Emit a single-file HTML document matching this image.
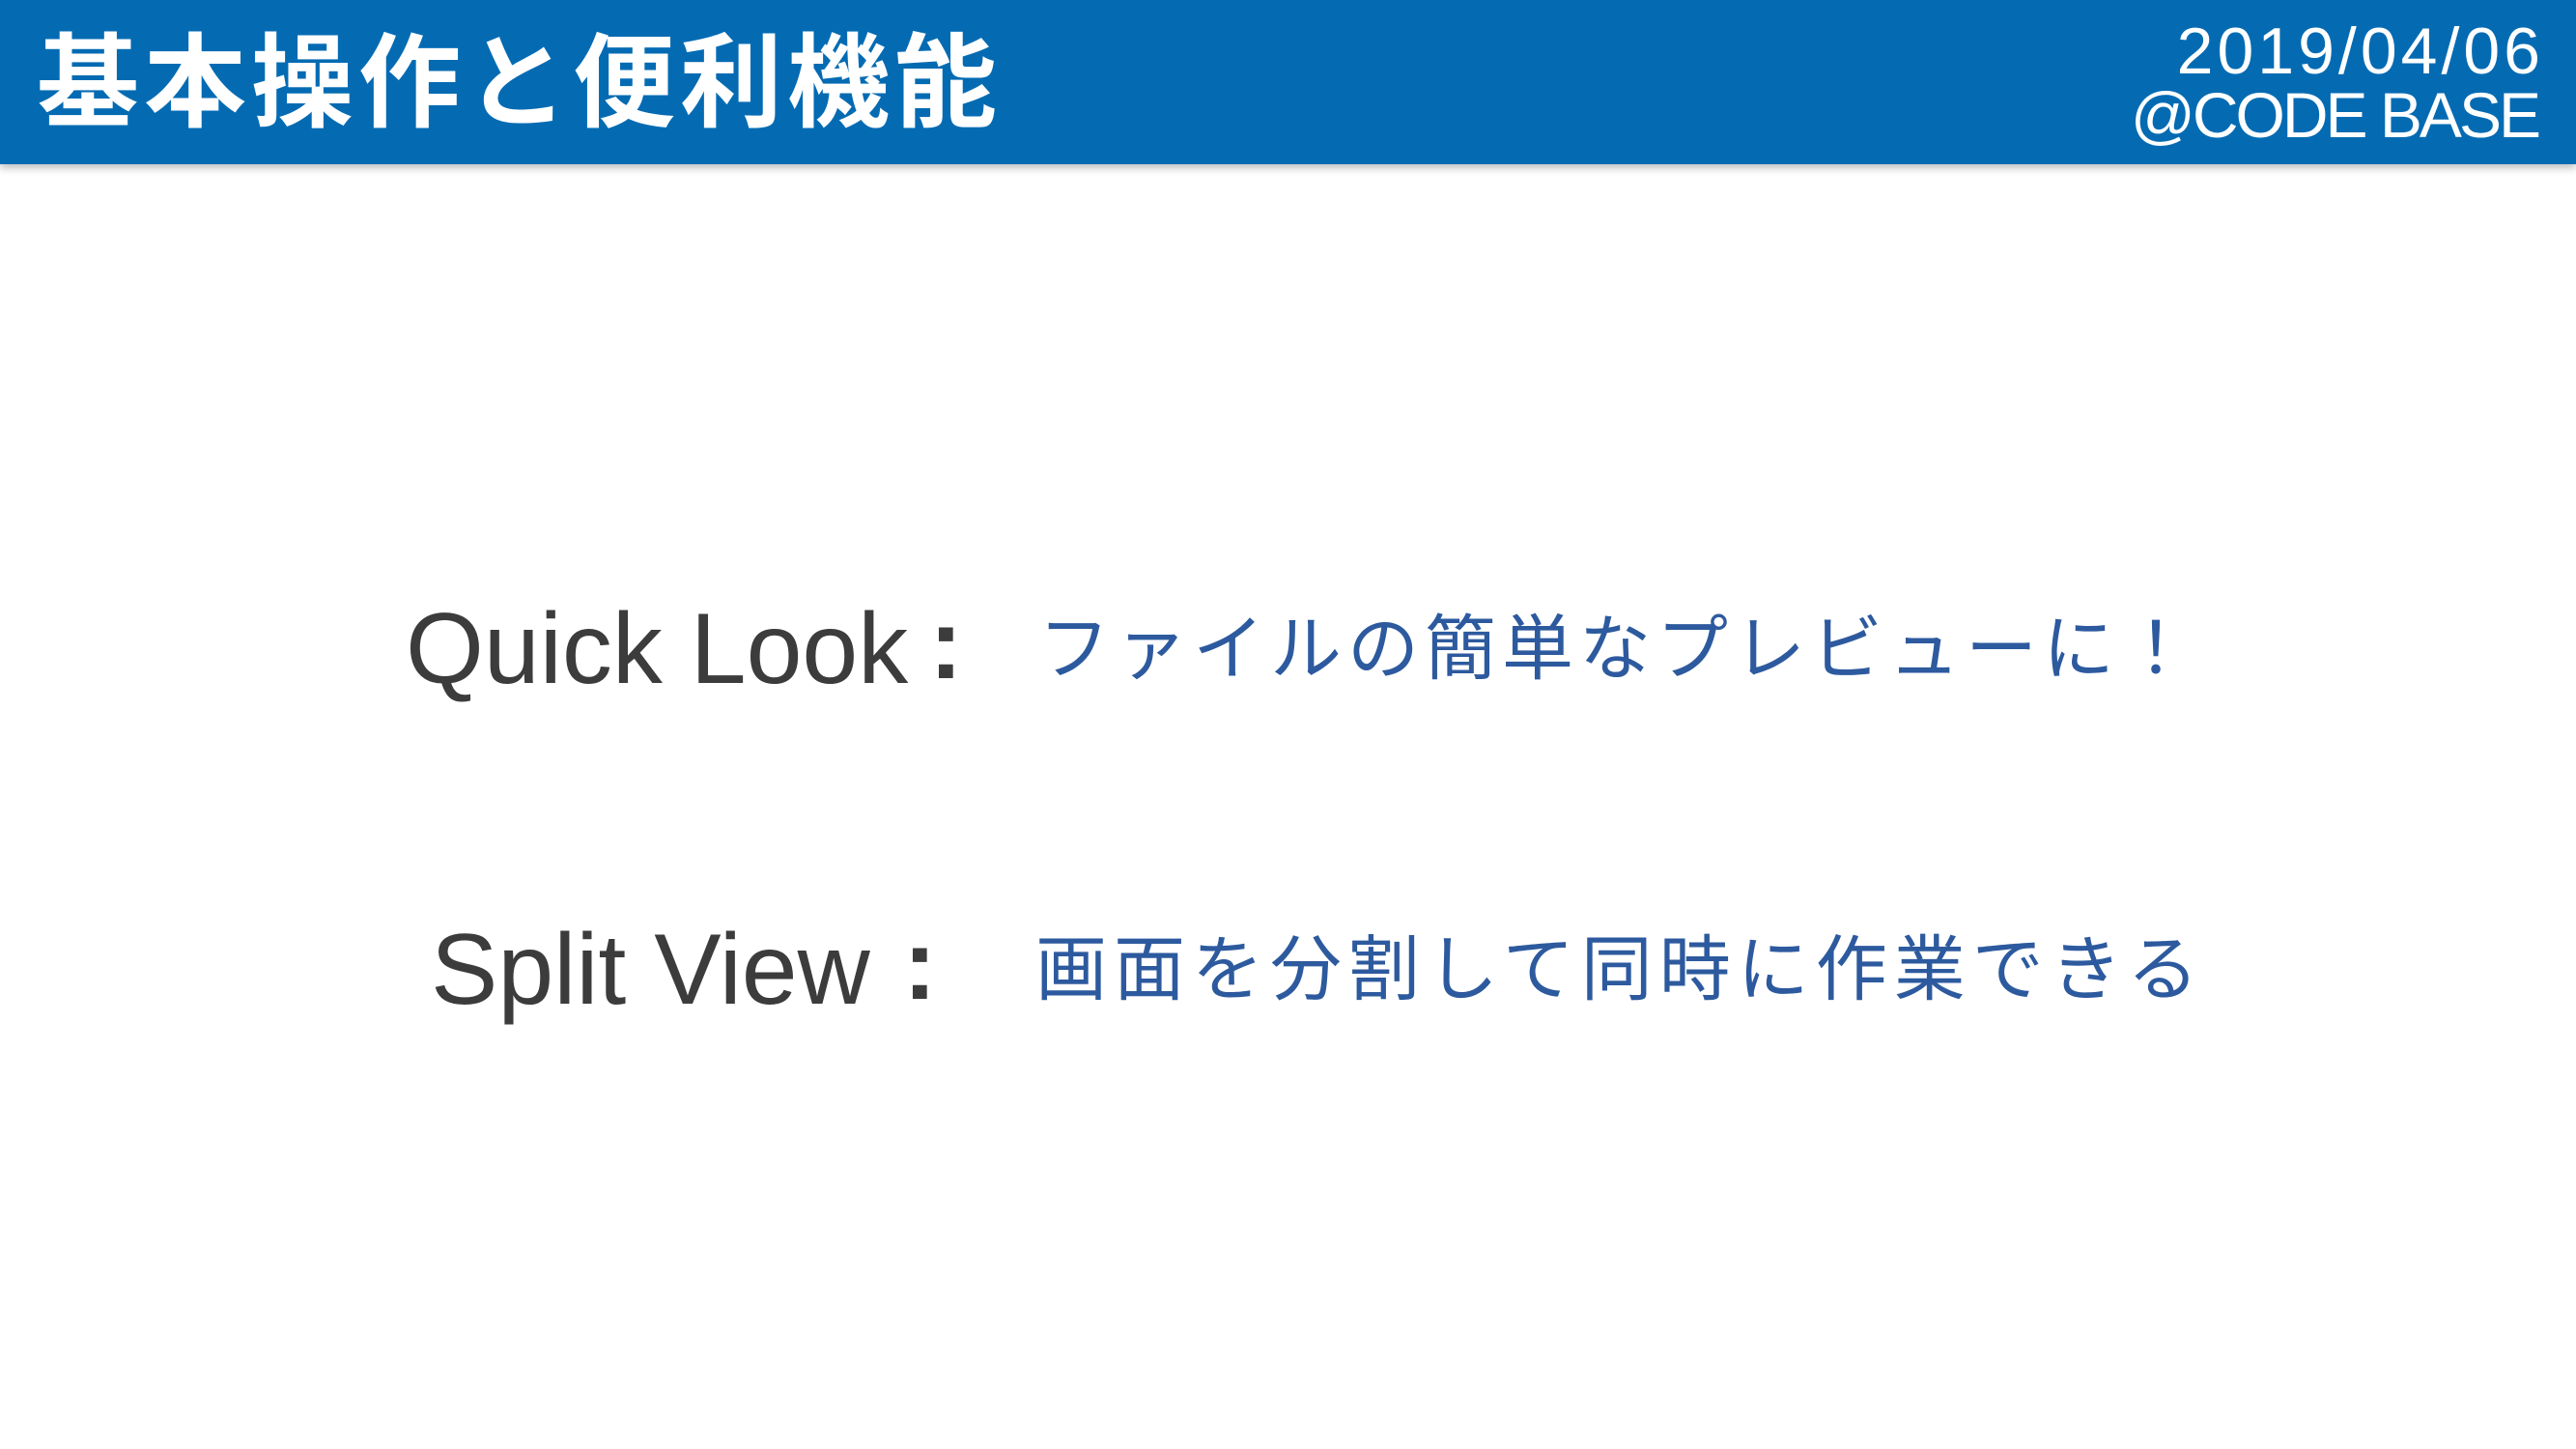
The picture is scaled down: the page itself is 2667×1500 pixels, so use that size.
<!DOCTYPE html>
<html><head><meta charset="utf-8"><style>
body{margin:0;width:2667px;height:1500px;background:#fff;position:relative;overflow:hidden;font-family:"Liberation Sans","Noto Sans CJK JP",sans-serif}
.hdr{position:absolute;left:0;top:0;width:2667px;height:170px;background:#046bb3;box-shadow:0 4px 8px rgba(0,0,0,.25)}
.t{position:absolute;left:38px;top:22px;font-size:106px;line-height:130px;color:#fff;font-weight:bold;letter-spacing:5px;white-space:nowrap}
.d{position:absolute;right:37px;color:#fff;line-height:70px;text-align:right;white-space:nowrap}
.l{position:absolute;white-space:nowrap;line-height:110px}
.e{color:#3c3c3c;font-size:104px}
.j{color:#2d5a9e;font-size:74px;letter-spacing:6px}
</style></head><body>
<div class="hdr">
<div class="t">基本操作と便利機能</div>
<div class="d" style="top:18px;font-size:68px;letter-spacing:4px;right:33px">2019/04/06</div>
<div class="d" style="top:84px;font-size:66px;letter-spacing:-3px;right:39px">@CODE BASE</div>
</div>
<div class="l e" style="left:420px;top:617px">Quick Look</div>
<div class="l e" style="left:962px;top:612px;font-weight:bold">:</div>
<div class="l j" style="left:1075px;top:617px">ファイルの簡単なプレビューに！</div>
<div class="l e" style="left:446px;top:949px">Split View</div>
<div class="l e" style="left:935px;top:944px;font-weight:bold">:</div>
<div class="l j" style="left:1072px;top:949px;letter-spacing:7px">画面を分割して同時に作業できる</div>
</body></html>
